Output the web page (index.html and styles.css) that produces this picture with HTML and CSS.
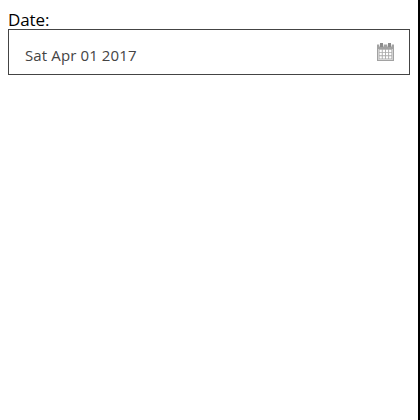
FILE: index.html
```html
<!DOCTYPE html>
<html lang="en">
<head>
<meta charset="utf-8">
<title>Date</title>
<link rel="stylesheet" href="styles.css">
</head>
<body>
<main class="page">
  <label class="label" for="date">Date:</label>
  <div class="field" id="date">
    <span class="value">Sat Apr 01 2017</span>
    <svg class="icon" width="17" height="18" viewBox="0 0 17 18">
      <path fill="#a2a2a2" d="M0 1.500h17V18H0z"/>
      <path fill="#fff" d="M2.300 0h4.400v3.500H2.300zM10.300 0h4.400v3.500h-4.400z"/>
      <path fill="#8c8c8c" d="M3 0h3v4H3zM11 0h3v4h-3z"/>
      <path fill="#fff" d="M1.500 6h14v11h-14z"/>
      <path fill="#aaa" d="M2 6h13v10.500H2z"/>
      <path fill="none" stroke="#fff" stroke-width="2.300" stroke-dasharray="2.300 .9" d="M2.500 8h12M2.500 11.200h12M2.500 14.400h12"/>
    </svg>
  </div>
</main>
</body>
</html>
```
FILE: styles.css
```css
* { box-sizing: border-box; }
body { margin: 0; background: #fff; font-family: "Open Sans", "Noto Sans", sans-serif; }
.page { height: 420px; padding: 8px 8px 0; border-right: 2px solid #000; }
.label { display: block; height: 21px; font-size: 17px; line-height: 24px; letter-spacing: -0.1px; color: #000; }
.field { display: flex; align-items: center; justify-content: space-between; height: 46px; padding: 0 15px 0 16px; border: 1px solid #444; }
.value { font-size: 15px; line-height: 20px; padding-top: 6px; letter-spacing: 0.12px; color: #444; }
```
